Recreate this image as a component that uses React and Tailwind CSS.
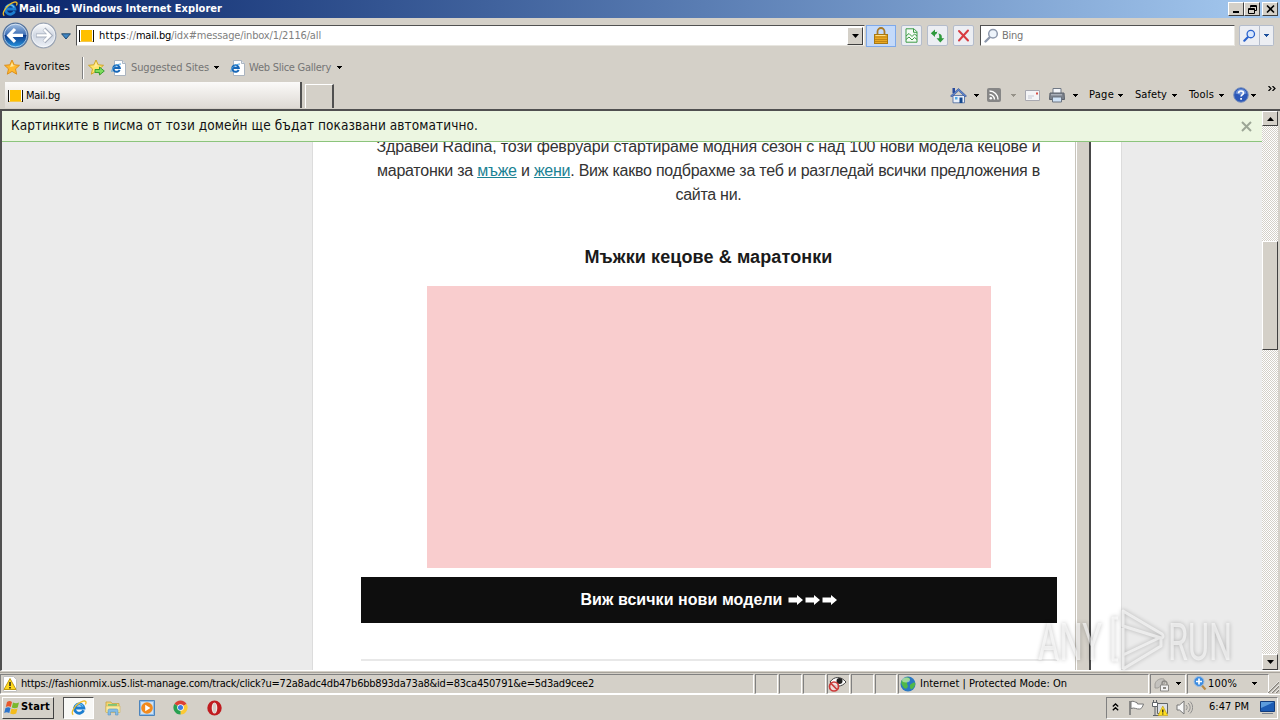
import React, { useLayoutEffect, useRef, useState } from "react";

const UI = "font-['DejaVu_Sans_Condensed','DejaVu_Sans',sans-serif]";
const ARIAL = "font-['Liberation_Sans',sans-serif]";
const RAISED = "border border-t-white border-l-white border-r-[#404040] border-b-[#404040] bg-[#d4d0c8]";
const SUNKEN = "border border-t-[#808080] border-l-[#808080] border-r-white border-b-white";

/* Spreads or tightens letters so that a label fills exactly w pixels. */
function Fit({ w, className = "", children }) {
  const ref = useRef(null);
  const [ls, setLs] = useState(0);
  useLayoutEffect(() => {
    const el = ref.current;
    el.style.letterSpacing = "0px";
    const n = el.textContent.length;
    setLs((w - el.getBoundingClientRect().width) / n);
    el.style.letterSpacing = "";
  }, [w]);
  return (
    <span ref={ref} className={"inline-block shrink-0 whitespace-nowrap " + className} style={{ letterSpacing: ls + "px" }}>
      {children}
    </span>
  );
}

function Down({ className = "" }) {
  return (
    <svg className={"shrink-0 " + className} width="5" height="3" viewBox="0 0 5 3" shapeRendering="crispEdges">
      <path d="M0 0h5v1H4v1H3v1H2V2H1V1H0z" fill="currentColor" />
    </svg>
  );
}

function IE({ size = 16, className = "" }) {
  return (
    <svg className={"shrink-0 " + className} width={size} height={size} viewBox="0 0 16 16">
      <path d="M12.6 10.3a4.7 4.7 0 1 1 .3-2.3H4.2" fill="none" stroke="#1c7ed0" strokeWidth="2.8" />
      <path d="M12.2 6.6A4.6 4.6 0 0 0 4 6" fill="none" stroke="#6cc4f4" strokeWidth="1.2" />
      <path d="M2.3 14.6C-.5 13 3 7 7.2 3.8 10.5 1.2 14.6-.1 15 2.2c.1.8-.2 1.6-.6 2.3" fill="none" stroke="#eebc28" strokeWidth="1.3" />
    </svg>
  );
}

function PageIE() {
  return (
    <svg className="shrink-0" width="16" height="16" viewBox="0 0 16 16">
      <path d="M3.5.5h8l3 3v12h-11z" fill="#fff" stroke="#aab4c0" />
      <path d="M11.5.5v3h3" fill="#e4e8ee" stroke="#aab4c0" />
      <path d="M8.6 9.8a3.3 3.3 0 1 1 .2-1.8H2.8" fill="none" stroke="#1767b8" strokeWidth="2" />
      <path d="M1 12C0 9 5 4 10 4" fill="none" stroke="#48a0e0" strokeWidth="1" />
    </svg>
  );
}

function Star({ arrow }) {
  return (
    <svg className="shrink-0" width="17" height="17" viewBox="0 0 17 17">
      <path d="M8 1l2.2 4.8 5.3.5-4 3.6 1.2 5.3L8 12.4l-4.7 2.8 1.2-5.3-4-3.6 5.3-.5z" fill={arrow ? "#ffe56a" : "#ffb92e"} stroke={arrow ? "#c9a021" : "#d98a17"} strokeWidth=".9" />
      <path d="M8 3.2l1.4 3.2 2.6.4L6 8z" fill="#ffe9a0" />
      {arrow && <path d="M7 10.5h4.5V8l4.8 4-4.8 4v-2.5H7z" fill="#7ddc5c" stroke="#2f9a2d" strokeWidth=".9" />}
    </svg>
  );
}

function MailIcon() {
  return (
    <svg className="shrink-0" width="15" height="12" viewBox="0 0 15 12" shapeRendering="crispEdges">
      <path d="M0 0h15v12H0z" fill="#fff" />
      <path d="M2 0h11v11H2z" fill="#ffc000" />
      <path d="M0 0h1v12H0zM14 0h1v12h-1z" fill="#111" />
      <path d="M1 11h13v1H1z" fill="#f3c74c" />
    </svg>
  );
}

function RoundButton({ back }) {
  return (
    <svg className="shrink-0" width="27" height="27" viewBox="0 0 27 27">
      <defs>
        <linearGradient id="back" x2="0" y2="1">
          <stop stopColor="#a8c4e4" />
          <stop offset=".48" stopColor="#3a6cb4" />
          <stop offset=".5" stopColor="#0c3c8c" />
          <stop offset="1" stopColor="#2a9ae4" />
        </linearGradient>
        <linearGradient id="fwd" x2="0" y2="1">
          <stop stopColor="#fff" />
          <stop offset=".5" stopColor="#cfd6e2" />
          <stop offset="1" stopColor="#eef2f8" />
        </linearGradient>
      </defs>
      <circle cx="13.5" cy="13.5" r="12.4" fill={back ? "url(#back)" : "url(#fwd)"} stroke={back ? "#56749c" : "#9aa4b4"} strokeWidth="1.2" />
      <circle cx="13.5" cy="13.5" r="11.3" fill="none" stroke="#fff" strokeOpacity=".55" />
      {back ? (
        <path d="M13 7l-6.3 6.4L13 19.8M7.5 13.4H21" fill="none" stroke="#fff" strokeWidth="3.2" />
      ) : (
        <g fill="none">
          <path d="M14 7l6.3 6.4-6.3 6.4M19.5 13.4H6" stroke="#a4acba" strokeWidth="4" />
          <path d="M14 7.5l6 5.9-6 5.9M19 13.4H6.6" stroke="#fff" strokeWidth="2.4" />
        </g>
      )}
    </svg>
  );
}

function Magnifier({ color = "#8e99ad", fill = "#eef4fb", size = 15 }) {
  return (
    <svg className="shrink-0" width={size} height={size} viewBox="0 0 15 15">
      <path d="M1.5 13.5L6 9" stroke={color} strokeWidth="2.4" strokeLinecap="round" />
      <circle cx="9" cy="5.8" r="4.3" fill={fill} stroke={color} strokeWidth="1.5" />
    </svg>
  );
}

function TitleBar() {
  return (
    <div className="flex h-[18px] items-center bg-linear-to-r from-[#0a246a] to-[#a6caf0] pl-[2px] pr-[2px]">
      <IE />
      <Fit w={203} className={UI + " ml-[1px] mt-[1px] text-[11px] font-bold text-white"}>Mail.bg - Windows Internet Explorer</Fit>
      <div className="ml-auto flex">
        <WinButton><path d="M3 8h6v2H3z" fill="#000" /></WinButton>
        <WinButton>
          <path d="M4.5 2.5h6v5h-2M4.5 3.5h6M4.5 2.5v2M2.5 5.5h6v5h-6zM2.5 6.5h6" fill="none" stroke="#000" />
        </WinButton>
        <div className="w-[2px]" />
        <WinButton><path d="M3 2.5l7 7M10 2.5l-7 7" stroke="#000" strokeWidth="1.6" /></WinButton>
      </div>
    </div>
  );
}

function WinButton({ children }) {
  return (
    <div className={RAISED + " flex h-[14px] w-[16px] items-center justify-center"}>
      <svg width="13" height="12" viewBox="0 0 13 12">{children}</svg>
    </div>
  );
}

function ToolButton({ className = "", children }) {
  return (
    <div className={"flex h-[21px] w-[21px] shrink-0 items-center justify-center rounded-[2px] border border-[#b4bccb] bg-[#eceef3] " + className}>
      {children}
    </div>
  );
}

function NavRow() {
  return (
    <div className="flex h-[35px] items-center pl-[2px]">
      <RoundButton back />
      <div className="ml-[1px]"><RoundButton /></div>
      <svg className="ml-[4px] mt-[1px] shrink-0" width="10" height="7" viewBox="0 0 10 7">
        <path d="M.6.8h8.8L5 6z" fill="#3f86c4" stroke="#163f68" strokeWidth=".9" />
      </svg>
      <div className="ml-[5px] flex h-[21px] w-[789px] shrink-0 items-center border border-b-[#e8e6e0] border-l-[#505050] border-r-[#e8e6e0] border-t-[#505050] bg-white pl-[2px] pr-[1px]">
        <MailIcon />
        <span className={UI + " ml-[5px] mt-[1px] flex text-[11px] text-[#808080]"}>
          <Fit w={27} className="text-black">https</Fit>
          <Fit w={10}>://</Fit>
          <Fit w={35} className="text-black">mail.bg</Fit>
          <Fit w={150}>/idx#message/inbox/1/2116/all</Fit>
        </span>
        <div className={RAISED + " ml-auto flex h-[18px] w-[16px] items-center justify-center text-black"}>
          <svg width="7" height="4" viewBox="0 0 7 4"><path d="M0 0h7L3.5 4z" /></svg>
        </div>
      </div>
      <div className="ml-[1px] flex h-[22px] w-[30px] shrink-0 items-center justify-center border border-[#7ea9ea] bg-[#c4dafa]">
        <svg width="14" height="17" viewBox="0 0 14 17">
          <path d="M3.5 8V4.5a3.5 3.5 0 0 1 7 0V8" fill="none" stroke="#a87a28" strokeWidth="1.8" />
          <rect x=".5" y="7.5" width="13" height="9" fill="#e9a823" stroke="#a87812" />
          <path d="M1 10h12M1 12.5h12M1 14.5h12" stroke="#b67e10" strokeWidth=".8" />
          <path d="M1.5 8.5h10" stroke="#ffe08a" />
        </svg>
      </div>
      <ToolButton className="ml-[5px]">
        <svg width="13" height="15" viewBox="0 0 13 15">
          <path d="M1 .8h8l3 3v10.4H1z" fill="#f4fbf4" stroke="#3c9a46" />
          <path d="M8.5 1v3.3H12" fill="none" stroke="#3c9a46" />
          <path d="M1 8l3-2.5 3 3L9.5 6l2.5 2M1 11.5L4 9l3 3 2.5-2.5 2.5 2" fill="none" stroke="#3c9a46" />
        </svg>
      </ToolButton>
      <ToolButton className="ml-[5px]">
        <svg width="15" height="14" viewBox="0 0 15 14">
          <path d="M5 .5L.8 4.3 5 8V5.8C5.8 5.6 7 5 7.3 2.200 6.500 3 6 3.100 5 3z" fill="#2f9a3c" />
          <path d="M10.300 13.500l4-4.300h-2.500C12 6.500 11.500 5 8 4.600c1.400 1 1.300 2.600 1.200 4.600H6.500z" fill="#2f9a3c" />
        </svg>
      </ToolButton>
      <ToolButton className="ml-[5px]">
        <svg width="13" height="13" viewBox="0 0 13 13">
          <path d="M2 2l9 9.5M11 1.5L2 11.5" stroke="#d83b41" strokeWidth="2" strokeLinecap="round" />
        </svg>
      </ToolButton>
      <div className="ml-[6px] flex h-[21px] w-[255px] shrink-0 items-center border border-b-[#e8e6e0] border-l-[#505050] border-r-[#e8e6e0] border-t-[#505050] bg-white pl-[3px]">
        <Magnifier />
        <Fit w={21} className={UI + " ml-[3px] mt-[2px] text-[11px] text-[#757575]"}>Bing</Fit>
      </div>
      <ToolButton className="ml-[4px] rounded-r-none"><Magnifier color="#2a62cc" fill="#d8e8ff" size={13} /></ToolButton>
      <ToolButton className="w-[14px]! rounded-l-none border-l-0 text-[#1d4f9c]"><Down /></ToolButton>
    </div>
  );
}

function FavoritesRow() {
  return (
    <div className={UI + " flex h-[29px] items-center pl-[4px] text-[11px] text-[#757575]"}>
      <Star />
      <Fit w={46} className="ml-[3px] text-black">Favorites</Fit>
      <div className="ml-[12px] h-[22px] w-px bg-[#808080]" />
      <div className="mr-[4px] h-[22px] w-px bg-white" />
      <Star arrow />
      <div className="w-[6px]" />
      <PageIE />
      <Fit w={78} className="ml-[4px] mt-[1px]">Suggested Sites</Fit>
      <Down className="ml-[5px] text-black" />
      <div className="w-[11px]" />
      <PageIE />
      <Fit w={82} className="ml-[3px] mt-[1px]">Web Slice Gallery</Fit>
      <Down className="ml-[6px] text-black" />
    </div>
  );
}

function CommandBar() {
  return (
    <div className={UI + " mr-[4px] flex h-[24px] items-center text-[11px] text-black"}>
      <svg className="shrink-0" width="17" height="17" viewBox="0 0 17 17">
        <path d="M2.5 1h2.5v5H2.5z" fill="#284a9c" />
        <path d="M3 8.5h11.5v7.3H3z" fill="#e9f0fa" stroke="#48649c" strokeWidth=".8" />
        <path d="M.5 9L8.5 1.5 16.5 9l-1.5.8-6.5-6-6.5 6z" fill="#5f86cc" stroke="#2c4c94" strokeWidth=".6" />
        <path d="M9.5 10.5h3V16h-3z" fill="#14488e" />
        <path d="M5 10h2.5v2.5H5z" fill="#52a8e4" />
      </svg>
      <Down className="ml-[7px]" />
      <svg className="ml-[8px] shrink-0" width="14" height="14" viewBox="0 0 14 14">
        <rect width="14" height="14" rx="2" fill="#868686" />
        <circle cx="3.8" cy="10.3" r="1.3" fill="#fff" />
        <path d="M2.5 6.5a5 5 0 0 1 5 5M2.5 3a8.5 8.5 0 0 1 8.5 8.5" fill="none" stroke="#fff" strokeWidth="1.4" />
      </svg>
      <Down className="ml-[10px] text-[#969289]" />
      <svg className="ml-[9px] shrink-0" width="15" height="11" viewBox="0 0 15 11">
        <path d="M.5.5h14v10H.5z" fill="#f4f4f6" stroke="#a8a8b0" />
        <path d="M11 2.5h2v2h-2z" fill="#d85048" />
        <path d="M3 6h6M3 8h4" stroke="#c4c8d4" />
      </svg>
      <svg className="ml-[9px] shrink-0" width="16" height="15" viewBox="0 0 16 15">
        <path d="M4 .5h8V6H4z" fill="#f4f6fa" stroke="#707884" />
        <path d="M1 5h14l.5 6.5H.5z" fill="#7c828c" stroke="#5c626c" />
        <path d="M3.5 9h9v5h-9z" fill="#cfe2f6" stroke="#6c7480" />
        <path d="M2 6.8h11" stroke="#bec4cc" />
      </svg>
      <Down className="ml-[8px]" />
      <Fit w={25} className="ml-[11px]">Page</Fit>
      <Down className="ml-[4px]" />
      <Fit w={32} className="ml-[12px]">Safety</Fit>
      <Down className="ml-[5px]" />
      <Fit w={25} className="ml-[12px]">Tools</Fit>
      <Down className="ml-[5px]" />
      <svg className="ml-[9px] shrink-0" width="16" height="16" viewBox="0 0 16 16">
        <circle cx="8" cy="8" r="7.3" fill="#2c58b8" stroke="#7c92bc" />
        <path d="M2.5 6.5a5.6 5.6 0 0 1 11 0C10 8 6 8 2.5 6.5z" fill="#86a8e6" fillOpacity=".7" />
        <path d="M5.6 6.2C5.6 3.3 10.5 3.3 10.5 6c0 1.700-2.400 1.700-2.400 3.600M8.100 11v1.800" fill="none" stroke="#fff" strokeWidth="1.7" />
      </svg>
      <Down className="ml-[2px]" />
      <svg className="mb-[13px] ml-[12px] shrink-0" width="8" height="5" viewBox="0 0 8 5">
        <path d="M.5 0L3 2.5.5 5M4.5 0L7 2.5 4.5 5" fill="none" stroke="#000" strokeWidth="1.2" />
      </svg>
    </div>
  );
}

function TabRow() {
  return (
    <div className="flex h-[26px] items-end pl-[5px]">
      <div className={UI + " flex h-[26px] w-[297px] items-center border-r-2 border-[#505050] bg-linear-to-b from-[#fbfaf9] to-[#dedad4] pl-[3px] pt-[2px] text-[11px]"}>
        <MailIcon />
        <Fit w={34} className="ml-[3px]">Mail.bg</Fit>
      </div>
      <div className="ml-[3px] h-[24px] w-[29px] border-l border-r-2 border-t border-l-white border-r-[#505050] border-t-white" />
      <div className="ml-auto self-center"><CommandBar /></div>
    </div>
  );
}

const DITHER = "bg-[repeating-conic-gradient(#d4d0c8_0_25%,#ffffff_0_50%)] bg-[length:2px_2px]";

function ScrollBar() {
  return (
    <div className={DITHER + " flex w-[16px] shrink-0 flex-col"}>
      <div className={RAISED + " flex h-[15px] items-center justify-center"}>
        <svg width="7" height="4" viewBox="0 0 7 4"><path d="M3.5 0L7 4H0z" /></svg>
      </div>
      <div className={RAISED + " mt-[115px] h-[109px]"} />
      <div className={RAISED + " mt-auto flex h-[16px] items-center justify-center"}>
        <svg width="7" height="4" viewBox="0 0 7 4"><path d="M0 0h7L3.5 4z" /></svg>
      </div>
    </div>
  );
}

function Mail() {
  return (
    <div className={ARIAL + " flex h-full w-[762px] shrink-0 flex-col items-center overflow-hidden bg-white pl-[29px] text-[16px] leading-[24px] text-[#333333]"}>
      <div className="-mt-[7px] flex shrink-0 flex-col items-center">
        <Fit w={664}>Здравей Radina, този февруари стартираме модния сезон с над 100 нови модела кецове и</Fit>
        <Fit w={663}>
          маратонки за <a className="text-[#1b8294] underline">мъже</a> и <a className="text-[#1b8294] underline">жени</a>. Виж какво подбрахме за теб и разгледай всички предложения в
        </Fit>
        <Fit w={66}>сайта ни.</Fit>
      </div>
      <Fit w={248} className="mt-[38px] text-[18px] font-bold text-[#1a1a1a]">Мъжки кецове &amp; маратонки</Fit>
      <div className="mt-[17px] h-[282px] w-[564px] shrink-0 bg-[#f9cdce]" />
      <div className="mt-[9px] flex h-[46px] w-[696px] shrink-0 items-center justify-center bg-[#0e0e0e] font-bold text-white">
        <Fit w={202}>Виж всички нови модели</Fit>
        <span className="ml-[5px] flex gap-[2px]">
          <Arrow /><Arrow /><Arrow />
        </span>
      </div>
      <div className="mt-[36px] h-[2px] w-[696px] shrink-0 bg-[#e8e8e8]" />
    </div>
  );
}

function Arrow() {
  return (
    <svg width="15" height="10" viewBox="0 0 15 10">
      <path d="M.5 2.500h8.500V0L15 5 9 10V7.500H.5z" fill="#fff" />
    </svg>
  );
}

function Page() {
  return (
    <div className="flex h-[562px] border-l-2 border-t-2 border-l-[#505050] border-t-[#505050] border-b border-b-white">
      <div className="flex w-[1260px] shrink-0 flex-col">
        <div className="flex h-[31px] shrink-0 items-center justify-between border-b border-[#8cc47c] bg-[#ecf6e1] pl-[9px] pr-[10px]">
          <Fit w={467} className="-mt-[2px] font-['DejaVu_Sans_Condensed','DejaVu_Sans',sans-serif] text-[13.5px] text-[#111111]">
            Картинките в писма от този домейн ще бъдат показвани автоматично.
          </Fit>
          <svg width="11" height="11" viewBox="0 0 11 11"><path d="M1 1l9 9M10 1L1 10" stroke="#9ca696" strokeWidth="2" /></svg>
        </div>
        <div className="flex min-h-0 flex-1">
          <div className="w-[311px] shrink-0 border-r border-[#dcdcdc] bg-[#ebebeb]" />
          <Mail />
          <div className="w-[16px] shrink-0 border-l border-r-2 border-l-[#c8c4bc] border-r-[#484848] bg-[#d4d0c8]">
            <div className="h-full w-px bg-white" />
          </div>
          <div className="w-[30px] shrink-0 bg-white" />
          <div className="flex-1 border-l border-[#dcdcdc] bg-[#ebebeb]" />
        </div>
      </div>
      <ScrollBar />
    </div>
  );
}

function Pane({ className = "", children }) {
  return <div className={SUNKEN + " flex h-[20px] shrink-0 items-center " + className}>{children}</div>;
}

function StatusBar() {
  return (
    <div className={UI + " flex h-[22px] items-center gap-[1px] border-t border-[#a8a49c] text-[11px] text-black"}>
      <Pane className="w-[754px] pl-[1px]">
        <svg className="shrink-0" width="16" height="16" viewBox="0 0 16 16">
          <path d="M1.5.5h10l3 3v12h-13z" fill="#fff" stroke="#c0c0c0" />
          <path d="M8 2.5l6 11H2z" fill="#ffd91e" stroke="#c09a10" strokeLinejoin="round" />
          <path d="M8 6v4M8 11v1.5" stroke="#222" strokeWidth="1.5" />
        </svg>
        <Fit w={573} className="ml-[3px] mt-[1px]">https://fashionmix.us5.list-manage.com/track/click?u=72a8adc4db47b6bb893da73a8&amp;id=83ca450791&amp;e=5d3ad9cee2</Fit>
      </Pane>
      <Pane className="w-[23px]" />
      <Pane className="w-[23px]" />
      <Pane className="w-[23px]" />
      <Pane className="w-[23px]">
        <svg width="19" height="16" viewBox="0 0 19 16">
          <path d="M2 6c4-6 11-6 16 0-4 5-11 6-16 0z" fill="#fff" stroke="#444" />
          <circle cx="11.5" cy="5" r="3" fill="#222" />
          <circle cx="6" cy="10.5" r="4.5" fill="#f4dcdc" fillOpacity=".8" stroke="#cc3a3a" strokeWidth="1.7" />
          <path d="M3 7.5l6 6" stroke="#cc3a3a" strokeWidth="1.7" />
        </svg>
      </Pane>
      <Pane className="w-[23px]" />
      <Pane className="w-[22px]" />
      <Pane className="w-[251px] pl-[1px]">
        <svg className="shrink-0" width="16" height="16" viewBox="0 0 16 16">
          <circle cx="8" cy="8" r="7.5" fill="#2a78c4" />
          <path d="M2 4c3-4 8-3 8-1s-3 2-3 4 2 3 0 5-4-1-5-3-1-3 0-5zM11 8c2-1 3-2 4-1s-1 5-3 6-3-4-1-5z" fill="#50b848" />
          <ellipse cx="6" cy="4" rx="4" ry="2.5" fill="#fff" fillOpacity=".45" />
        </svg>
        <Fit w={147} className="ml-[4px] mt-[1px]">Internet | Protected Mode: On</Fit>
      </Pane>
      <Pane className="w-[36px] pl-[3px]">
        <svg className="shrink-0" width="16" height="16" viewBox="0 0 16 16">
          <path d="M1 8c1-4 5-6 9-5l1 4-7 5H1z" fill="#c4c2be" stroke="#989690" strokeWidth=".8" />
          <path d="M8 9V7.5a2.5 2.5 0 0 1 5 0V9" fill="none" stroke="#8c8a86" strokeWidth="1.4" />
          <path d="M6.5 9h8v6h-8z" fill="#f2f2f2" stroke="#8c8a86" />
          <path d="M9 11h3v2H9z" fill="#8c8a86" />
        </svg>
        <Down className="ml-[6px]" />
      </Pane>
      <Pane className="w-[82px] pl-[5px]">
        <svg className="shrink-0" width="14" height="15" viewBox="0 0 14 15">
          <path d="M8.5 9l4 4.5" stroke="#b88a48" strokeWidth="2.2" />
          <circle cx="6" cy="5.5" r="5" fill="#3c8ce0" stroke="#9cbce0" />
          <path d="M6 2.5v6M3 5.5h6" stroke="#fff" strokeWidth="1.7" />
        </svg>
        <Fit w={29} className="ml-[1px] mt-[1px]">100%</Fit>
        <Down className="ml-[15px]" />
      </Pane>
      <svg className="-ml-[3px] mt-[6px] shrink-0" width="12" height="12" viewBox="0 0 12 12">
        <path d="M1 12L12 1M5 12l7-7M9 12l3-3" stroke="#87837b" strokeWidth="1.4" />
        <path d="M0 12L12 0M4 12l8-8M8 12l4-4" stroke="#fff" strokeWidth=".7" />
      </svg>
    </div>
  );
}

function TaskBar() {
  return (
    <div className={UI + " flex h-[26px] items-center border-t border-white pl-[2px] pr-[2px] text-[11px] text-black"}>
      <div className={RAISED + " flex h-[22px] w-[52px] shrink-0 items-center pl-[1px]"}>
        <svg className="shrink-0" width="16" height="15" viewBox="0 0 16 15">
          <path d="M3 2c2-1.500 3.500-1.300 5 0L6.800 7C5 6 3.500 6 1.800 7z" fill="#e8582c" />
          <path d="M9 2.500c2 1 4 1 6 0l-1.300 5c-2 1-4 1-5.900 0z" fill="#7ab82c" />
          <path d="M1.500 8c2-1 3.500-1 5 0l-1.200 5C3.500 12 2 12 .2 13z" fill="#2c74cc" />
          <path d="M7.500 8.500c2 1 4 1 6 0l-1.300 5c-2 1-4 1-6 0z" fill="#f4bc1c" />
        </svg>
        <Fit w={29} className="ml-[1px] font-bold">Start</Fit>
      </div>
      <div className="ml-[9px] flex h-[22px] w-[31px] shrink-0 items-center justify-center border border-b-white border-l-[#505050] border-r-white border-t-[#505050] bg-[#f8f8f6]">
        <IE />
      </div>
      <svg className="ml-[11px] shrink-0" width="16" height="16" viewBox="0 0 16 16">
        <path d="M1 2h5l1 1.500h7V12H1z" fill="#f2d674" stroke="#c8a440" strokeWidth=".8" />
        <path d="M3 4h9v3H3z" fill="#7cc67c" />
        <path d="M1 6h14v6.500H1z" fill="#faea9c" stroke="#d4b450" strokeWidth=".6" />
        <path d="M3 15v-4.500a1.500 1.500 0 0 1 1.500-1.500h7a1.500 1.500 0 0 1 1.500 1.500V15h-2.500v-3h-5v3z" fill="#84bce4" stroke="#5c94c4" strokeWidth=".6" />
      </svg>
      <svg className="ml-[18px] shrink-0" width="16" height="16" viewBox="0 0 16 16">
        <path d="M.5.5h15v15H.5z" fill="#8cbcea" stroke="#4c84bc" />
        <path d="M2 2h12v12H2z" fill="#cfe2f4" />
        <circle cx="8" cy="8" r="5.800" fill="#f28a1c" />
        <path d="M6.200 4.800v6.400L11.400 8z" fill="#fff" />
      </svg>
      <svg className="ml-[18px] shrink-0" width="15" height="15" viewBox="0 0 16 16">
        <path d="M8 8L1.500 4.200A7.500 7.500 0 0 1 14.500 4.200z" fill="#dc4034" />
        <path d="M8 8l6.500-3.800A7.500 7.500 0 0 1 8 15.500z" fill="#fcc934" />
        <path d="M8 8v7.500A7.500 7.500 0 0 1 1.500 4.200z" fill="#28a050" />
        <circle cx="8" cy="8" r="3.500" fill="#fff" />
        <circle cx="8" cy="8" r="2.700" fill="#3c7ce4" />
      </svg>
      <svg className="ml-[19px] shrink-0" width="15" height="16" viewBox="0 0 15 16">
        <ellipse cx="7.500" cy="8" rx="7.200" ry="7.600" fill="#c01c20" />
        <ellipse cx="7.500" cy="8" rx="2.800" ry="5.600" fill="#f4e4e4" />
        <ellipse cx="7.500" cy="8" rx="1.600" ry="5" fill="#d4d0c8" />
      </svg>
      <div className={SUNKEN + " ml-auto flex h-[22px] w-[172px] items-center pl-[5px]"}>
        <svg className="mb-[2px] shrink-0" width="7" height="8" viewBox="0 0 7 8">
          <path d="M.8 3.500l2.700-2.500 2.700 2.500M.8 7.200l2.700-2.500 2.700 2.500" fill="none" stroke="#000" strokeWidth="1.300" />
        </svg>
        <svg className="ml-[9px] shrink-0" width="17" height="15" viewBox="0 0 17 15">
          <path d="M2 1v14" stroke="#777" strokeWidth="1.600" />
          <path d="M3 1.500c3-1 4 1 6 1l.5 1.500h6c-1 3-2 5-4 5-3 .5-5-2-8.500-.5z" fill="#fff" stroke="#777" />
        </svg>
        <svg className="ml-[7px] shrink-0" width="16" height="16" viewBox="0 0 16 16">
          <path d="M5.500 3.500h10v10h-10z" fill="#dce0e6" stroke="#606468" />
          <path d="M.5 2.500h5v4h-5zM3 6.500v9M1.500 0v2.500M4.500 0v2.500M1 15.500h6" fill="#fff" stroke="#606468" />
          <path d="M10.800 6l5 9.500H6z" fill="#ffde20" stroke="#bc9a14" strokeWidth=".6" />
          <path d="M10.800 9.500v3M10.800 13.400v1.200" stroke="#222" strokeWidth="1.300" />
        </svg>
        <svg className="ml-[8px] shrink-0" width="17" height="15" viewBox="0 0 17 15">
          <path d="M1 5h2.500L8 1v13l-4.500-4H1z" fill="#f8f8f8" stroke="#777" />
          <path d="M10 5c1.500 1.500 1.500 3.500 0 5M12 3c2.800 2.500 2.800 6.500 0 9M14 1.500c3.500 3.500 3.500 8.500 0 12" fill="none" stroke="#888" strokeWidth=".9" />
        </svg>
        <Fit w={40} className="ml-[16px]">6:47 PM</Fit>
        <svg className="ml-[11px] shrink-0" width="15" height="13" viewBox="0 0 15 13">
          <path d="M.5.5h14v10H.5z" fill="#1c5cb4" stroke="#123c7c" />
          <path d="M1 1h13L1 7z" fill="#5c9cdc" />
          <path d="M2 12.500h11" stroke="#7c8490" />
        </svg>
      </div>
    </div>
  );
}

function Watermark() {
  return (
    <svg className="pointer-events-none absolute left-[1030px] top-[602px] drop-shadow-[0_0_2px_rgba(0,0,0,0.4)]" width="240" height="72" viewBox="0 0 240 72">
      <g className="font-['Liberation_Sans_Narrow','Roboto',sans-serif]" fill="#fff" fillOpacity=".6" fontSize="52">
        <text x="8" y="58" textLength="64" lengthAdjust="spacingAndGlyphs">ANY</text>
        <text x="138" y="58" textLength="64" lengthAdjust="spacingAndGlyphs">RUN</text>
      </g>
      <g fill="none" stroke="#fff" strokeOpacity=".6" strokeWidth="3" strokeLinejoin="round">
        <path d="M88 16h-5v42h5" />
        <path d="M93 9l39 23c2 2 1 4-1 4L93 24zM93 67V26M93 53l38-18M93 67l38-23v-8" />
      </g>
    </svg>
  );
}

export default function App() {
  return (
    <div className="relative h-[720px] w-[1280px] overflow-hidden bg-[#d4d0c8]">
      <TitleBar />
      <NavRow />
      <FavoritesRow />
      <TabRow />
      <div className="h-[1px]" />
      <Page />
      <div className="h-[1px]" />
      <StatusBar />
      <TaskBar />
      <Watermark />
    </div>
  );
}
